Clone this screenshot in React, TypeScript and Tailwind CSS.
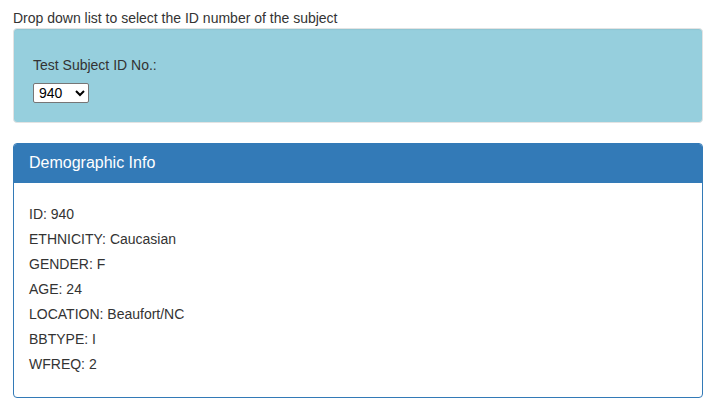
export default function App() {
  const rows = [
    "ID: 940",
    "ETHNICITY: Caucasian",
    "GENDER: F",
    "AGE: 24",
    "LOCATION: Beaufort/NC",
    "BBTYPE: I",
    "WFREQ: 2",
  ];
  return (
    <div
      className="bg-white text-[#333] text-[14px] leading-[20px] pl-[13px] pr-[12px] pt-[8px]"
      style={{ fontFamily: '"Liberation Sans", Arial, sans-serif' }}
    >
      <div>Drop down list to select the ID number of the subject</div>
      <div className="bg-[#96cfdd] border border-[#e3e3e3] rounded-[4px] p-[19px] mb-[20px] shadow-[inset_0_1px_1px_rgba(0,0,0,0.05)]">
        <div className="mt-[10px] mb-[10px] leading-[15.4px]">Test Subject ID No.:</div>
        <select
          defaultValue="940"
          className="h-[20px] w-[56px] border border-[#767676] rounded-[2px] bg-white text-[14px] text-black pl-[1px] leading-none"
          style={{ fontFamily: 'Arial, "Liberation Sans", sans-serif', appearance: "auto" }}
        >
          <option value="940">940</option>
        </select>
      </div>
      <div className="border border-[#337ab7] rounded-[4px] overflow-hidden">
        <div className="bg-[#337ab7] text-white px-[15px] py-[10px] border-b border-[#337ab7]">
          <div className="text-[16px] leading-[17.6px]">Demographic Info</div>
        </div>
        <div className="px-[15px] pt-[14px] pb-[15px] flex flex-col gap-[10px]">
          <div className="h-0" />
          {rows.map((r) => (
            <div key={r} className="leading-[15px]">
              {r}
            </div>
          ))}
          <div className="h-0" />
        </div>
      </div>
    </div>
  );
}
